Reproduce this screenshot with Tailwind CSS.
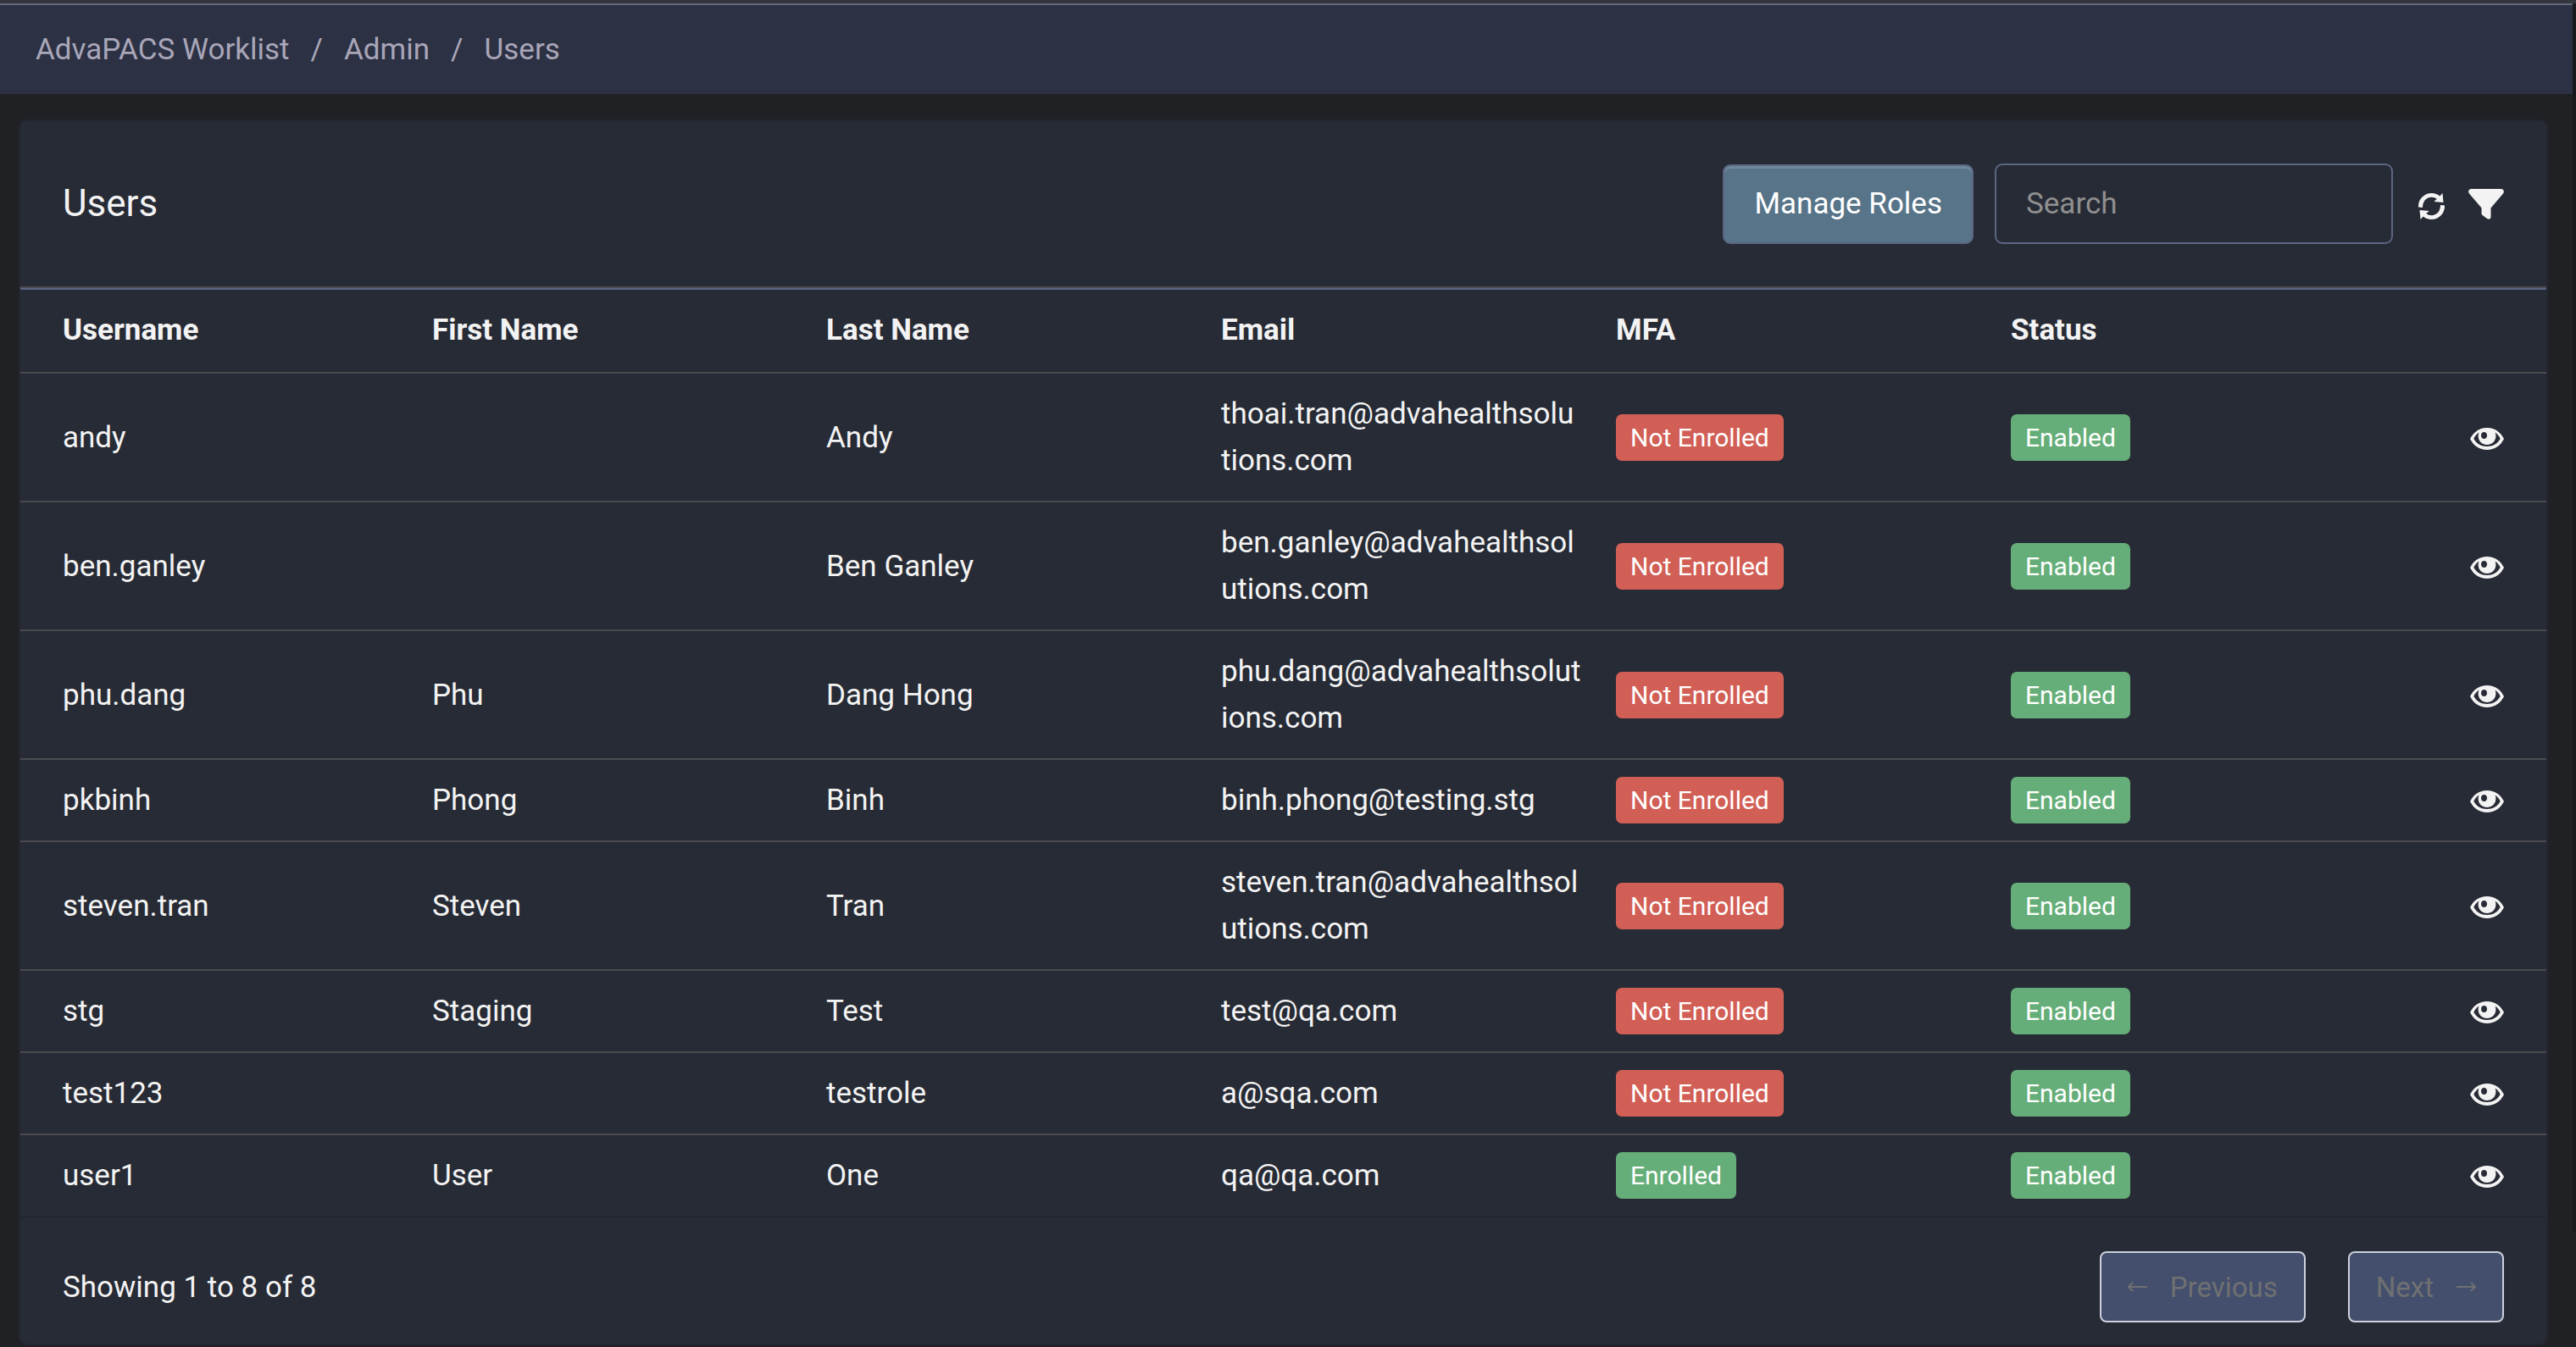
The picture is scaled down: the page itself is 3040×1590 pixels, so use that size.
<!DOCTYPE html>
<html lang="en">
<head>
<meta charset="utf-8">
<title>Users</title>
<script src="https://cdn.jsdelivr.net/npm/@tailwindcss/browser@4"></script>
</head>
<body class="min-h-screen bg-[#202124] font-[Roboto,sans-serif] text-[35px] leading-[55px] text-[#f3f3f3]">
<svg class="hidden" aria-hidden="true">
  <symbol id="eye" viewBox="0 0 40 26"><path fill="currentColor" fill-rule="evenodd" d="M20 0C29 0 36 5 40 13C36 21 29 26 20 26C11 26 4 21 0 13C4 5 11 0 20 0ZM10.500 5.500C7.500 7.500 5.500 10 4.300 13C8 19 13 22 20 22C27 22 32 19 35.700 13C34.500 10 32.500 7.500 29.500 5.500C30.500 7.500 30.500 9.500 30.300 11C29.500 16.500 25.500 20 20 20C14.500 20 10.500 16.500 9.700 11C9.500 9 9.800 7 10.500 5.500ZM16.500 5C14.500 5 13 6.500 13 9C13 11.500 14.500 13 16.500 13C18.500 13 20 11.500 20 9C20 6.500 18.500 5 16.500 5Z"/></symbol>
</svg>
<header class="border-t-4 border-[#33363f]">
  <nav aria-label="Breadcrumb" class="border-t-2 border-[#646878] bg-[#2c3144] px-[42px] pt-[25px] pb-[25px] text-[#a9a6b8]">
    <ol class="flex gap-[25px]">
      <li><a href="#">AdvaPACS Worklist</a></li>
      <li aria-hidden="true">/</li>
      <li><a href="#">Admin</a></li>
      <li aria-hidden="true">/</li>
      <li><a href="#" aria-current="page">Users</a></li>
    </ol>
  </nav>
</header>
<main class="pt-[30px] pr-[33px] pl-[22px]">
  <section class="rounded-[10px] border-2 border-[#23272f] bg-[#272b35]">
    <div class="flex items-center px-[50px] py-[50px]">
      <h1 class="flex-1 text-[44px]">Users</h1>
      <div class="flex items-center">
        <button class="mr-[25px] h-[94px] rounded-[9px] border-2 border-[#5c6682] bg-[#587488] px-[35px] text-white shadow-[inset_0_3px_0_#71889b]">Manage Roles</button>
        <input type="search" aria-label="Search" placeholder="Search" class="mr-[30px] h-[95px] w-[470px] rounded-[9px] border-2 border-[#5c6682] bg-transparent px-[35px] placeholder:text-[#8f8f8f]">
        <button aria-label="Refresh" class="mt-[5px] mr-[28px]"><svg class="block size-[31px]" viewBox="0 0 31 31" fill="currentColor"><path d="M0 16.500C-.500 7 7 0 15.500 0C19.500 0 22.800 1.300 25.300 3.500L28.500 0L29.500 11L18.300 10L21.800 7C20 5.500 18 4.800 15.500 4.800C9.500 4.800 5 9.500 5 17Z"/><path d="M31 14.500C31.500 24 24 31 15.500 31C11.500 31 8.200 29.700 5.700 27.500L2.500 31L1.500 20L12.700 21L9.200 24C11 25.500 13 26.200 15.500 26.200C21.500 26.200 26 21.500 26 14Z"/></svg></button>
        <button aria-label="Filter"><svg class="block h-[36px] w-[42px]" viewBox="0 0 42 36" fill="currentColor"><path d="M3.500 0H38.500C41.500 0 43 3 41 5.500L26.500 22.500V33C26.500 35.500 24 36.500 22 35L16.500 31Q15.500 30 15.500 29V22.500L1 5.500C-1 3 .500 0 3.500 0Z"/></svg></button>
      </div>
    </div>
    <div class="border-t-2 border-[#4b4b4f]">
    <table class="w-full table-fixed border-separate border-spacing-0 text-left">
      <colgroup><col class="w-[466px]"><col class="w-[465px]"><col class="w-[466px]"><col class="w-[466px]"><col class="w-[466px]"><col class="w-[466px]"><col></colgroup>
      <thead class="[&_th]:border-t-2 [&_th]:border-[#5c6682] [&_th]:px-[20px] [&_th]:pt-[20px] [&_th]:pb-[22px]"><tr>
        <th><span class="pl-[30px]">Username</span></th><th>First Name</th><th>Last Name</th><th>Email</th><th>MFA</th><th>Status</th><th></th>
      </tr></thead>
      <tbody id="rows" class="[&_td]:border-t-2 [&_td]:border-[#4b4b4f] [&_td]:px-[20px] [&_td]:py-[20px]"></tbody>
    </table>
    </div>
    <footer class="flex items-center justify-between border-t-2 border-[#23262f] px-[50px] pt-[40px] pb-[25px]">
      <p>Showing 1 to 8 of 8</p>
      <div class="flex gap-[50px] text-[33px] text-[#6f7072]">
        <button disabled class="flex h-[84px] items-center gap-[27px] rounded-[8px] border-2 border-[#cdd1dd] bg-[#434f6c] px-[31px]"><svg class="h-[12px] w-[23px]" viewBox="0 0 23 12" fill="none" stroke="currentColor" stroke-width="2"><path d="M23 6H1M6 1L1 6L6 11"/></svg>Previous</button>
        <button disabled class="flex h-[84px] items-center gap-[27px] rounded-[8px] border-2 border-[#cdd1dd] bg-[#434f6c] px-[31px]">Next<svg class="h-[12px] w-[23px]" viewBox="0 0 23 12" fill="none" stroke="currentColor" stroke-width="2"><path d="M0 6H22M17 1L22 6L17 11"/></svg></button>
      </div>
    </footer>
  </section>
</main>
<div aria-hidden="true" class="absolute top-[4px] right-0 h-[1450px] w-[4px] bg-[#191a1d]"></div>
<script>
const users = [
  ["andy", "", "Andy", "thoai.tran@advahealthsolutions.com", false],
  ["ben.ganley", "", "Ben Ganley", "ben.ganley@advahealthsolutions.com", false],
  ["phu.dang", "Phu", "Dang Hong", "phu.dang@advahealthsolutions.com", false],
  ["pkbinh", "Phong", "Binh", "binh.phong@testing.stg", false],
  ["steven.tran", "Steven", "Tran", "steven.tran@advahealthsolutions.com", false],
  ["stg", "Staging", "Test", "test@qa.com", false],
  ["test123", "", "testrole", "a@sqa.com", false],
  ["user1", "User", "One", "qa@qa.com", true]
];
const green = "bg-[#65ae79]", red = "bg-[#d25f56]";
const badge = (text, color) => `<span class="block w-fit rounded-[7px] px-[17px] text-[30px] text-white ${color}">${text}</span>`;
document.getElementById("rows").innerHTML = users.map(([name, first, last, mail, mfa]) => `
  <tr>
    <td><span class="pl-[30px]">${name}</span></td>
    <td>${first}</td>
    <td>${last}</td>
    <td class="break-all">${mail}</td>
    <td>${mfa ? badge("Enrolled", green) : badge("Not Enrolled", red)}</td>
    <td>${badge("Enabled", green)}</td>
    <td><button aria-label="View ${name}" class="mt-[3px] mr-[30px] ml-auto block"><svg class="block h-[26px] w-[40px]"><use href="#eye"/></svg></button></td>
  </tr>`).join("");
</script>
</body>
</html>
